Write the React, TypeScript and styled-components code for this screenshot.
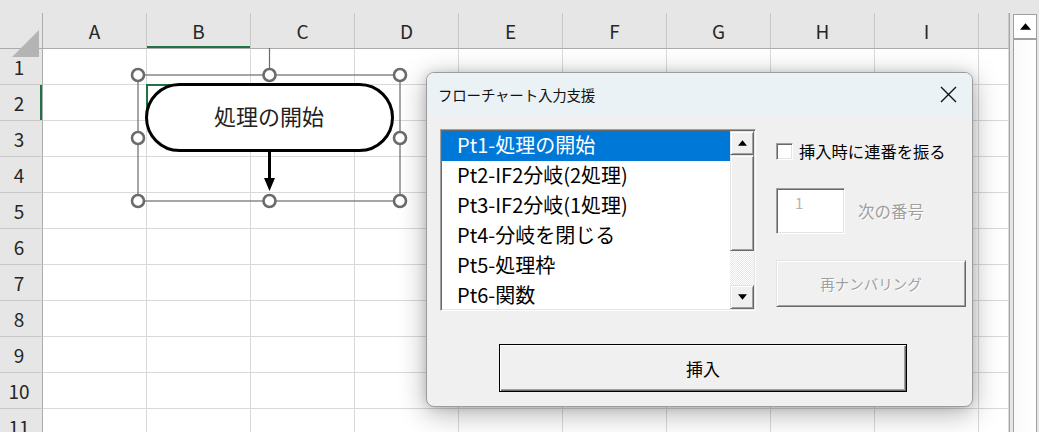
import React, { FC } from "react";
import styled, { createGlobalStyle, css } from "styled-components";

const GlobalStyle = createGlobalStyle`
  html, body {
    margin: 0;
    padding: 0;
    background: #e6e6e6;
  }
  * {
    box-sizing: border-box;
  }
`;

const FONT = `"Noto Sans CJK JP", "Noto Sans", sans-serif`;
const GREEN = "#217346";
const COLS = ["A", "B", "C", "D", "E", "F", "G", "H", "I", ""];
const ROWS = [1, 2, 3, 4, 5, 6, 7, 8, 9, 10, 11];
const ITEMS = [
  "Pt1-処理の開始",
  "Pt2-IF2分岐(2処理)",
  "Pt3-IF2分岐(1処理)",
  "Pt4-分岐を閉じる",
  "Pt5-処理枠",
  "Pt6-関数",
];

// classic win32 bevels
const raised = css`
  background: #f0f0f0;
  border: 1px solid;
  border-color: #e3e3e3 #696969 #696969 #e3e3e3;
  box-shadow: inset 1px 1px #fff, inset -1px -1px #a0a0a0;
`;
const sunken = css`
  background: #fff;
  border: 1px solid;
  border-color: #a0a0a0 #fff #fff #a0a0a0;
  box-shadow: inset 1px 1px #696969, inset -1px -1px #e3e3e3;
`;
const disabledText = css`
  color: #a0a0a0;
  text-shadow: 1px 1px 0 #fff;
`;

const Page = styled.div`
  position: relative;
  width: 1039px;
  height: 432px;
  overflow: hidden;
  display: flex;
  background: #e6e6e6;
  font-family: ${FONT};
`;
const Sheet = styled.div`
  width: 1010px;
  flex-shrink: 0;
  display: flex;
  flex-direction: column;
`;
const TopStrip = styled.div`
  height: 13px;
  flex-shrink: 0;
`;
const Grid = styled.div`
  display: grid;
  grid-template-columns: 43px repeat(9, 104px) 30px;
  grid-template-rows: 36px;
  grid-auto-rows: 36px;
  border-right: 1px solid #a6a6a6;
  background: #fff;
`;
const Corner = styled.div`
  position: relative;
  background: #e6e6e6;
  border-right: 1px solid #ababab;
  border-bottom: 1px solid #ababab;
  &::after {
    content: "";
    position: absolute;
    left: 12px;
    top: 17px;
    width: 0;
    height: 0;
    border-style: solid;
    border-width: 0 0 27px 27px;
    border-color: transparent transparent #b4b4b4 transparent;
  }
`;
const ColHead = styled.div<{ $active?: boolean }>`
  background: #e6e6e6;
  border-right: 1px solid #c8c8c8;
  border-bottom: 1px solid #ababab;
  box-shadow: ${(p) => (p.$active ? `inset 0 -2px ${GREEN}` : "none")};
  display: flex;
  align-items: center;
  justify-content: center;
  font-size: 19px;
  color: #262626;
`;
const RowHead = styled.div<{ $active?: boolean }>`
  background: #e6e6e6;
  border-right: 1px solid #ababab;
  border-bottom: 1px solid #c8c8c8;
  box-shadow: ${(p) => (p.$active ? `inset -2px 0 ${GREEN}` : "none")};
  display: flex;
  align-items: center;
  justify-content: center;
  font-size: 19px;
  color: #262626;
  padding-right: 4px;
`;
const Cell = styled.div<{ $selected?: boolean }>`
  position: relative;
  border-right: 1px solid #d9d9d9;
  border-bottom: 1px solid #d9d9d9;
  ${(p) =>
    p.$selected &&
    css`
      &::after {
        content: "";
        position: absolute;
        inset: -1px;
        border: 2px solid ${GREEN};
      }
    `}
`;

const SheetScroll = styled.div`
  width: 24px;
  flex-shrink: 0;
  margin: 14px 0 0 3px;
  border: 1px solid #a0a0a0;
  border-bottom: none;
  background: linear-gradient(to right, #fafafa, #fff);
  display: flex;
  flex-direction: column;
`;
const SheetScrollUp = styled.div`
  height: 25px;
  border-bottom: 2px solid #a0a0a0;
  background: #fff;
  display: flex;
  align-items: center;
  justify-content: center;
`;

// the flowchart shape drawn on the sheet
const ShapeLayer = styled.svg`
  position: absolute;
  left: 0;
  top: 0;
  overflow: visible;
`;

// the userform
const Dialog = styled.div`
  position: absolute;
  left: 426px;
  top: 72px;
  width: 547px;
  height: 335px;
  border: 1px solid #9c9c9c;
  border-radius: 8px;
  overflow: hidden;
  background: #f0f0f0;
  box-shadow: 0 6px 28px rgba(0, 0, 0, 0.32), 0 0 10px rgba(0, 0, 0, 0.12);
  font-family: ${FONT};
`;
const TitleBar = styled.div`
  height: 43px;
  background: #eaf2f6;
  display: flex;
  align-items: center;
  justify-content: space-between;
  padding: 0 15px 0 11px;
`;
const Title = styled.span`
  font-size: 14.5px;
  color: #111;
  letter-spacing: -0.2px;
`;
const CloseBtn = styled.svg`
  width: 17px;
  height: 17px;
`;
const Body = styled.div`
  padding: 13px 0 0 13px;
`;
const TopRow = styled.div`
  display: flex;
`;
const ListBox = styled.div`
  ${sunken};
  width: 316px;
  height: 182px;
  flex-shrink: 0;
  display: flex;
  padding: 1px;
`;
const Items = styled.ul`
  flex: 1;
  min-width: 0;
  margin: 0;
  padding: 0;
  list-style: none;
`;
const Item = styled.li<{ $selected?: boolean }>`
  height: 30px;
  line-height: 28px;
  padding-left: 15px;
  font-size: 20px;
  white-space: nowrap;
  color: ${(p) => (p.$selected ? "#fff" : "#000")};
  background: ${(p) => (p.$selected ? "#0078d7" : "transparent")};
`;
const ListScroll = styled.div`
  width: 24px;
  flex-shrink: 0;
  display: flex;
  flex-direction: column;
`;
const ScrollBtn = styled.div`
  ${raised};
  height: 24px;
  flex-shrink: 0;
  display: flex;
  align-items: center;
  justify-content: center;
`;
const Thumb = styled.div`
  ${raised};
  height: 96px;
  flex-shrink: 0;
`;
const Track = styled.div`
  flex: 1;
  background: repeating-conic-gradient(#fff 0 25%, #e6e6e6 0 50%) 0 0 / 2px 2px;
`;

const RightCol = styled.div`
  width: 190px;
  flex-shrink: 0;
  margin-left: 20px;
  padding-top: 13px;
  display: flex;
  flex-direction: column;
`;
const CheckRow = styled.label`
  display: flex;
  align-items: center;
  gap: 6px;
  height: 18px;
  font-size: 16.3px;
  color: #000;
  white-space: nowrap;
`;
const CheckBox = styled.span`
  ${sunken};
  width: 17px;
  height: 17px;
  flex-shrink: 0;
`;
const NumRow = styled.div`
  display: flex;
  align-items: center;
  margin-top: 28px;
`;
const NumBox = styled.div`
  ${sunken};
  width: 69px;
  height: 46px;
  padding: 4px 0 0 18px;
  font-size: 15px;
  line-height: 20px;
  color: #b4b4b4;
`;
const NumLabel = styled.span`
  ${disabledText};
  margin-left: 13px;
  font-size: 16.5px;
`;
const Button = styled.div<{ $default?: boolean; $disabled?: boolean }>`
  ${raised};
  display: flex;
  align-items: center;
  justify-content: center;
  ${(p) =>
    p.$default &&
    css`
      border: 1px solid #000;
      box-shadow: inset 1px 1px #fff, inset -1px -1px #696969,
        inset -2px -2px #a0a0a0;
    `}
  ${(p) => (p.$disabled ? disabledText : "color: #000;")}
`;
const RenumberButton = styled(Button)`
  margin-top: 26px;
  width: 190px;
  height: 47px;
  font-size: 14.5px;
`;
const InsertRow = styled.div`
  margin-top: 33px;
  padding-left: 59px;
`;
const InsertButton = styled(Button)`
  width: 408px;
  height: 48px;
  font-size: 17px;
`;

const Arrow: FC<{ up?: boolean; w?: number }> = ({ up, w = 9 }) => (
  <svg width={w} height={Math.ceil(w / 2) + 1} viewBox="0 0 10 6">
    <polygon points={up ? "0,6 10,6 5,0" : "0,0 10,0 5,6"} fill="#000" />
  </svg>
);

const Handle: FC<{ x: number; y: number }> = ({ x, y }) => (
  <circle cx={x} cy={y} r={6} fill="#fff" stroke="#6b6b6b" strokeWidth={2.6} />
);

const FlowShape: FC = () => (
  <ShapeLayer width={430} height={220}>
    <line x1={269.5} y1={48} x2={269.5} y2={70} stroke="#6b6b6b" strokeWidth={1.2} />
    <rect x={138} y={75} width={262} height={126} fill="none" stroke="#6b6b6b" strokeWidth={1.2} />
    <rect x={146.5} y={84.5} width={246} height={66} rx={33} fill="#fff" stroke="#000" strokeWidth={3} />
    <text
      x={269}
      y={125}
      textAnchor="middle"
      fontSize={22}
      fill="#222"
      style={{ fontFamily: FONT }}
    >
      処理の開始
    </text>
    <line x1={269.5} y1={151} x2={269.5} y2={180} stroke="#000" strokeWidth={3} />
    <polygon points="264,178 275,178 269.5,191" fill="#000" />
    {[75, 138, 201].map((y) =>
      [138, 269.5, 400].map((x) =>
        x === 269.5 && y === 138 ? null : <Handle key={`${x}-${y}`} x={x} y={y} />
      )
    )}
  </ShapeLayer>
);

const App: FC = () => {
  return (
    <Page>
      <GlobalStyle />
      <Sheet>
        <TopStrip />
        <Grid>
          <Corner />
          {COLS.map((c, i) => (
            <ColHead key={i} $active={c === "B"}>
              {c}
            </ColHead>
          ))}
          {ROWS.map((r) => (
            <React.Fragment key={r}>
              <RowHead $active={r === 2}>{r}</RowHead>
              {COLS.map((c, i) => (
                <Cell key={i} $selected={r === 2 && c === "B"} />
              ))}
            </React.Fragment>
          ))}
        </Grid>
      </Sheet>
      <SheetScroll>
        <SheetScrollUp>
          <Arrow up w={11} />
        </SheetScrollUp>
      </SheetScroll>

      <FlowShape />

      <Dialog>
        <TitleBar>
          <Title>フローチャート入力支援</Title>
          <CloseBtn viewBox="0 0 17 17">
            <path d="M1 1 L16 16 M16 1 L1 16" stroke="#111" strokeWidth={1.4} />
          </CloseBtn>
        </TitleBar>
        <Body>
          <TopRow>
            <ListBox>
              <Items>
                {ITEMS.map((t, i) => (
                  <Item key={t} $selected={i === 0}>
                    {t}
                  </Item>
                ))}
              </Items>
              <ListScroll>
                <ScrollBtn>
                  <Arrow up />
                </ScrollBtn>
                <Thumb />
                <Track />
                <ScrollBtn>
                  <Arrow />
                </ScrollBtn>
              </ListScroll>
            </ListBox>
            <RightCol>
              <CheckRow>
                <CheckBox />
                挿入時に連番を振る
              </CheckRow>
              <NumRow>
                <NumBox>1</NumBox>
                <NumLabel>次の番号</NumLabel>
              </NumRow>
              <RenumberButton $disabled>再ナンバリング</RenumberButton>
            </RightCol>
          </TopRow>
          <InsertRow>
            <InsertButton $default>挿入</InsertButton>
          </InsertRow>
        </Body>
      </Dialog>
    </Page>
  );
};

export default App;
